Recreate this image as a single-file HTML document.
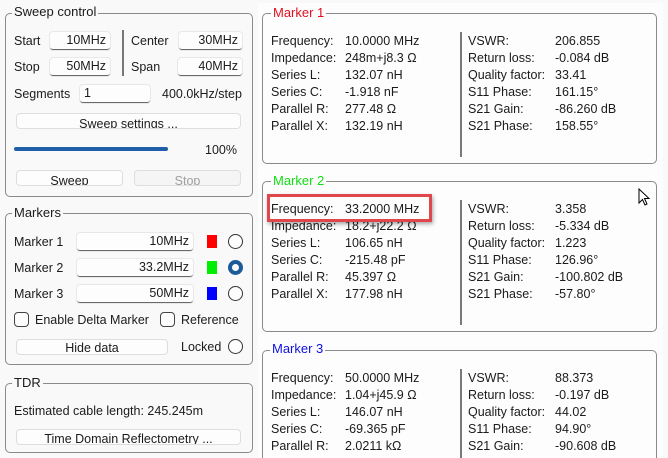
<!DOCTYPE html>
<html style="width:668px;height:458px;overflow:hidden"><head><meta charset="utf-8"><style>
*{margin:0;padding:0;box-sizing:border-box}
body{width:668px;height:458px;overflow:hidden;background:#f9f9f9;font-family:"Liberation Sans",sans-serif;font-size:12.5px;color:#1b1b1b;position:relative}
.a{position:absolute;white-space:nowrap}
.g{position:absolute;border:1px solid #8a8a8a;border-radius:5px}
.t{position:absolute;background:#f9f9f9;padding:0 2px;line-height:14px;font-size:13px}
.f{position:absolute;height:18px;background:#fdfdfd;border-radius:3px;border-bottom:1px solid #6a6a6a;text-align:right;padding-right:4px;line-height:17px;box-shadow:0 0 0 1px #e8e8e8}
.b{position:absolute;height:16px;background:#fdfdfd;border:1px solid #dedede;border-radius:4px;text-align:center;line-height:17px;overflow:hidden}
.r{position:absolute;width:15px;height:15px;border:1.3px solid #333;border-radius:50%;background:#fdfdfd}
.c{position:absolute;width:15px;height:15px;border:1.3px solid #444;border-radius:4px;background:#fdfdfd}
.mk{position:absolute;left:262px;width:395px;border:1px solid #8a8a8a;border-radius:5px}
.mt{position:absolute;left:8px;top:-8px;background:#fdfdfd;padding:0 2px;font-size:13px;line-height:14px}
.col{position:absolute;line-height:17px}
.dv{position:absolute;left:197px;width:2px;background:#7a7a7a}
#clip{position:absolute;left:0;top:0;width:668px;height:458px;overflow:hidden}
</style></head><body><div id="clip">
<div class="a" style="left:258px;top:3px;width:405px;height:455px;background:#fdfdfd"></div>

<div class="g" style="left:5px;top:13px;width:248px;height:184px"></div>
<div class="t" style="left:12px;top:5px">Sweep control</div>
<div class="a" style="left:14px;top:34px">Start</div>
<div class="f" style="left:50px;top:32px;width:60px">10MHz</div>
<div class="a" style="left:14px;top:60px">Stop</div>
<div class="f" style="left:50px;top:58px;width:60px">50MHz</div>
<div class="a" style="left:122px;top:30px;width:2px;height:46px;background:#777"></div>
<div class="a" style="left:131px;top:34px">Center</div>
<div class="f" style="left:179px;top:32px;width:63px">30MHz</div>
<div class="a" style="left:131px;top:60px">Span</div>
<div class="f" style="left:178px;top:58px;width:64px">40MHz</div>
<div class="a" style="left:14px;top:87px">Segments</div>
<div class="f" style="left:80px;top:85px;width:70px;text-align:left;padding-left:4px">1</div>
<div class="a" style="left:162px;top:87px">400.0kHz/step</div>
<div class="b" style="left:16px;top:113px;width:225px;line-height:20px">Sweep settings ...</div>
<div class="a" style="left:14px;top:147px;width:154px;height:4px;border-radius:2px;background:#1f5fa8"></div>
<div class="a" style="left:205px;top:143px">100%</div>
<div class="b" style="left:16px;top:170px;width:107px;line-height:20px">Sweep</div>
<div class="b" style="left:134px;top:170px;width:107px;line-height:20px;color:#a0a0a0;background:#f5f5f5">Stop</div>

<div class="g" style="left:5px;top:213px;width:248px;height:152px"></div>
<div class="t" style="left:12px;top:206px">Markers</div>
<div class="a" style="left:14px;top:235px">Marker 1</div>
<div class="f" style="left:77px;top:233px;width:116px">10MHz</div>
<div class="a" style="left:207px;top:235px;width:10px;height:13px;background:#f00"></div>
<div class="r" style="left:228px;top:234px"></div>
<div class="a" style="left:14px;top:261px">Marker 2</div>
<div class="f" style="left:77px;top:259px;width:116px">33.2MHz</div>
<div class="a" style="left:207px;top:261px;width:10px;height:13px;background:#0e0"></div>
<div class="r" style="left:228px;top:260px;border:4px solid #1c5a98"></div>
<div class="a" style="left:14px;top:287px">Marker 3</div>
<div class="f" style="left:77px;top:285px;width:116px">50MHz</div>
<div class="a" style="left:207px;top:287px;width:10px;height:13px;background:#00f"></div>
<div class="r" style="left:228px;top:286px"></div>
<div class="c" style="left:14px;top:312px"></div>
<div class="a" style="left:35px;top:313px">Enable Delta Marker</div>
<div class="c" style="left:160px;top:312px"></div>
<div class="a" style="left:181px;top:313px">Reference</div>
<div class="b" style="left:16px;top:339px;width:152px;line-height:16px">Hide data</div>
<div class="a" style="left:181px;top:340px">Locked</div>
<div class="r" style="left:228px;top:339px"></div>

<div class="g" style="left:5px;top:383px;width:248px;height:70px"></div>
<div class="t" style="left:12px;top:376px">TDR</div>
<div class="a" style="left:14px;top:404px">Estimated cable length: 245.245m</div>
<div class="b" style="left:16px;top:429px;width:225px;line-height:18px">Time Domain Reflectometry ...</div>

<div class="mk" style="top:13px;height:151px">
<div class="mt" style="color:#e01020">Marker 1</div>
<div class="col" style="left:8px;top:19px">Frequency:<br>Impedance:<br>Series L:<br>Series C:<br>Parallel R:<br>Parallel X:</div>
<div class="col" style="left:82px;top:19px">10.0000 MHz<br>248m+j8.3 Ω<br>132.07 nH<br>-1.918 nF<br>277.48 Ω<br>132.19 nH</div>
<div class="dv" style="top:18px;height:125px"></div>
<div class="col" style="left:205px;top:19px">VSWR:<br>Return loss:<br>Quality factor:<br>S11 Phase:<br>S21 Gain:<br>S21 Phase:</div>
<div class="col" style="left:292px;top:19px">206.855<br>-0.084 dB<br>33.41<br>161.15°<br>-86.260 dB<br>158.55°</div>
</div>

<div class="mk" style="top:181px;height:151px">
<div class="mt" style="color:#10dd10">Marker 2</div>
<div class="col" style="left:8px;top:19px">Frequency:<br>Impedance:<br>Series L:<br>Series C:<br>Parallel R:<br>Parallel X:</div>
<div class="col" style="left:82px;top:19px">33.2000 MHz<br>18.2+j22.2 Ω<br>106.65 nH<br>-215.48 pF<br>45.397 Ω<br>177.98 nH</div>
<div class="dv" style="top:18px;height:125px"></div>
<div class="col" style="left:205px;top:19px">VSWR:<br>Return loss:<br>Quality factor:<br>S11 Phase:<br>S21 Gain:<br>S21 Phase:</div>
<div class="col" style="left:292px;top:19px">3.358<br>-5.334 dB<br>1.223<br>126.96°<br>-100.802 dB<br>-57.80°</div>
</div>
<div class="a" style="left:267px;top:194px;width:165px;height:28px;border:3px solid #e0474c;box-shadow:1px 2px 4px rgba(0,0,0,.35)"></div>

<div class="mk" style="top:350px;height:108px;border-bottom:none;border-radius:5px 5px 0 0;overflow:hidden">
<div class="mt" style="color:#1010dd;top:0;position:absolute"></div>
<div class="col" style="left:8px;top:19px">Frequency:<br>Impedance:<br>Series L:<br>Series C:<br>Parallel R:</div>
<div class="col" style="left:82px;top:19px">50.0000 MHz<br>1.04+j45.9 Ω<br>146.07 nH<br>-69.365 pF<br>2.0211 kΩ</div>
<div class="dv" style="top:18px;height:90px"></div>
<div class="col" style="left:205px;top:19px">VSWR:<br>Return loss:<br>Quality factor:<br>S11 Phase:<br>S21 Gain:</div>
<div class="col" style="left:292px;top:19px">88.373<br>-0.197 dB<br>44.02<br>94.90°<br>-90.608 dB</div>
</div>
<div class="mt" style="left:270px;top:342px;color:#1010dd">Marker 3</div>

<svg class="a" style="left:638px;top:188px" width="14" height="20" viewBox="0 0 14 20"><path d="M1 1 L1 15 L4.5 11.5 L7 17 L9 16 L6.5 10.5 L11 10.5 Z" fill="#fff" stroke="#000" stroke-width="1"/></svg>
</div></body></html>
